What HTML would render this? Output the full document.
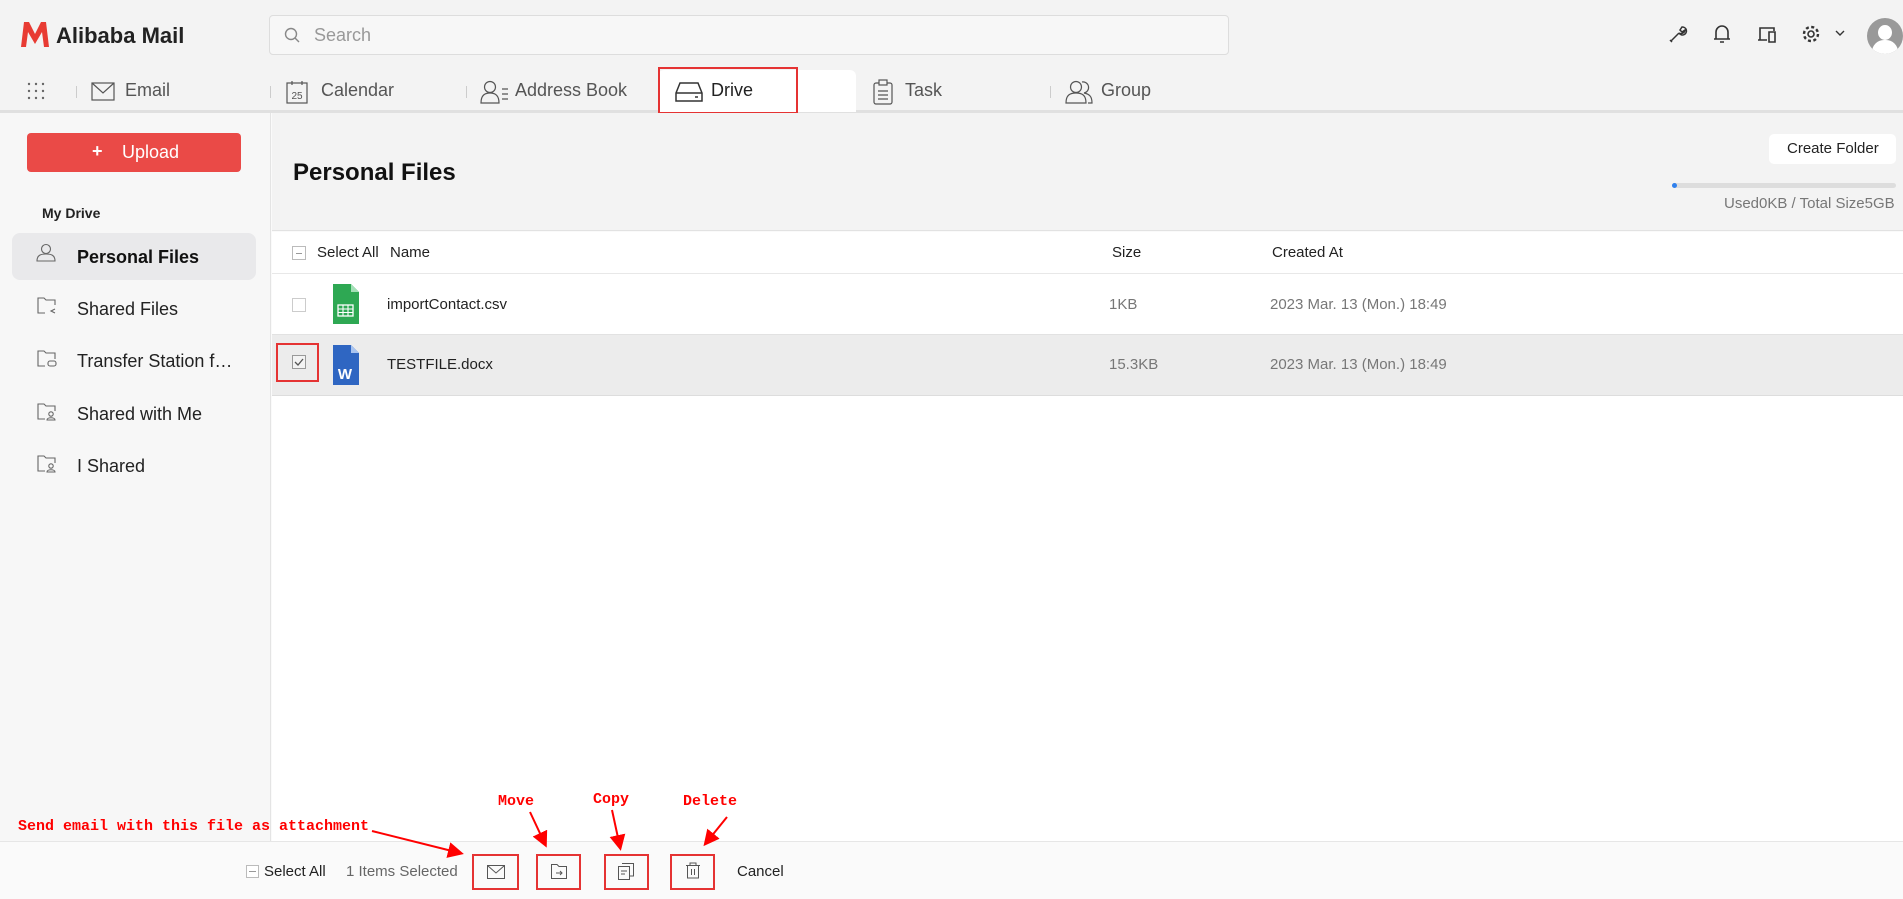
<!DOCTYPE html>
<html><head><meta charset="utf-8"><style>
*{margin:0;padding:0;box-sizing:border-box}
body{width:1903px;height:899px;overflow:hidden;background:#fafafa;font-family:"Liberation Sans",Arial,sans-serif;color:#222;position:relative}
.a{position:absolute}
.t{position:absolute;white-space:nowrap;line-height:1}
svg{position:absolute;overflow:visible}
.red{color:#f00;font-family:"Liberation Mono",monospace;font-weight:bold;font-size:15px}
.rb{position:absolute;border:2px solid #e53333}
</style></head><body>
<!-- header -->
<div class="a" style="left:0;top:0;width:1903px;height:112px;background:#f3f3f3"></div>
<div class="a" style="left:0;top:110px;width:1903px;height:3px;background:#e0e0e0"></div>
<svg style="left:20px;top:20px" width="30" height="30" viewBox="0 0 30 30"><path d="M1 27 L4 2 L9 2 L15 14 L21 2 L26 2 L29 27 L24 27 L22 12 L15 24 L8 12 L6 27Z" fill="#e83b33"/></svg>
<div class="t" style="left:56px;top:25px;font-size:22px;font-weight:bold;color:#222">Alibaba Mail</div>
<div class="a" style="left:269px;top:15px;width:960px;height:40px;background:#f7f7f7;border:1px solid #ddd;border-radius:4px"></div>
<svg style="left:284px;top:27px" width="16" height="16"><circle cx="7" cy="7" r="5.5" fill="none" stroke="#888" stroke-width="1.4"/><path d="M11 11 L15 15" stroke="#888" stroke-width="1.4"/></svg>
<div class="t" style="left:314px;top:26px;font-size:18px;color:#999">Search</div>
<!-- right icons -->
<svg style="left:1668px;top:24px" width="20" height="20" viewBox="0 0 20 20"><path d="M3 17 L11 9 M11 9 a4 4 0 1 0 3 -6 l-2 3 l2 2 l3 -2 a4 4 0 0 1 -6 3 M2 16 l2 2" fill="none" stroke="#333" stroke-width="1.5"/></svg>
<svg style="left:1712px;top:23px" width="20" height="22"><path d="M4 16 V9 a6 6 0 0 1 12 0 V16 Z M2 16 H18 M8 19 H12" fill="none" stroke="#333" stroke-width="1.6"/></svg>
<svg style="left:1757px;top:25px" width="22" height="20"><path d="M3 15 V3 H17 V6 M1 15 H10 M12 7 H18 V17 H12 Z" fill="none" stroke="#333" stroke-width="1.6"/></svg>
<svg style="left:1801px;top:24px" width="20" height="20"><circle cx="10" cy="10" r="3" fill="none" stroke="#333" stroke-width="1.6"/><circle cx="10" cy="10" r="7" fill="none" stroke="#333" stroke-width="2.4" stroke-dasharray="3 2.5"/></svg>
<svg style="left:1835px;top:30px" width="10" height="8"><path d="M1 1 L5 5 L9 1" fill="none" stroke="#333" stroke-width="1.4"/></svg>
<div class="a" style="left:1867px;top:18px;width:36px;height:36px;border-radius:50%;background:#999;overflow:hidden"><div class="a" style="left:11px;top:7px;width:14px;height:15px;border-radius:50%;background:#fff"></div><div class="a" style="left:5px;top:22px;width:26px;height:16px;border-radius:12px 12px 0 0;background:#fff"></div></div>
<!-- tabs -->
<svg style="left:27px;top:82px" width="18" height="18"><g fill="#666"><circle cx="2" cy="2" r="1.2"/><circle cx="9" cy="2" r="1.2"/><circle cx="16" cy="2" r="1.2"/><circle cx="2" cy="9" r="1.2"/><circle cx="9" cy="9" r="1.2"/><circle cx="16" cy="9" r="1.2"/><circle cx="2" cy="16" r="1.2"/><circle cx="9" cy="16" r="1.2"/><circle cx="16" cy="16" r="1.2"/></g></svg>
<div class="a" style="left:76px;top:86px;width:1px;height:12px;background:#ccc"></div>
<div class="a" style="left:270px;top:86px;width:1px;height:12px;background:#ccc"></div>
<div class="a" style="left:466px;top:86px;width:1px;height:12px;background:#ccc"></div>
<div class="a" style="left:1050px;top:86px;width:1px;height:12px;background:#ccc"></div>
<svg style="left:91px;top:82px" width="24" height="20"><rect x="1" y="1" width="22" height="17" fill="none" stroke="#555" stroke-width="1.2"/><path d="M1 1 L12 11 L23 1" fill="none" stroke="#555" stroke-width="1.2"/></svg>
<div class="t" style="left:125px;top:81px;font-size:18px;color:#555">Email</div>
<svg style="left:286px;top:80px" width="22" height="24"><rect x="1" y="3" width="20" height="20" fill="none" stroke="#555" stroke-width="1.2"/><path d="M6 1 V5 M16 1 V5" stroke="#555" stroke-width="1.2"/><text x="11" y="19" font-size="10" text-anchor="middle" fill="#555" font-family="Liberation Sans">25</text></svg>
<div class="t" style="left:321px;top:81px;font-size:18px;color:#555">Calendar</div>
<svg style="left:480px;top:80px" width="30" height="24"><circle cx="10" cy="7" r="5.5" fill="none" stroke="#555" stroke-width="1.2"/><path d="M1 23 C1 15 5 13 10 13 C15 13 19 15 19 23 Z" fill="none" stroke="#555" stroke-width="1.2"/><path d="M22 9 H28 M22 14 H28 M22 19 H28" stroke="#555" stroke-width="1.2"/></svg>
<div class="t" style="left:515px;top:81px;font-size:18px;color:#555">Address Book</div>
<div class="a" style="left:658px;top:70px;width:198px;height:42px;background:#fff;border-radius:6px 6px 0 0"></div>
<div class="rb" style="left:658px;top:67px;width:140px;height:47px"></div>
<svg style="left:675px;top:81px" width="28" height="22"><path d="M1 12 L5 2 H23 L27 12 V20 H1 Z M1 12 H27" fill="none" stroke="#333" stroke-width="1.5"/><path d="M20 16 H23" stroke="#333" stroke-width="1.5"/></svg>
<div class="t" style="left:711px;top:81px;font-size:18px;color:#222">Drive</div>
<svg style="left:872px;top:79px" width="22" height="26"><rect x="2" y="4" width="18" height="21" rx="2" fill="none" stroke="#555" stroke-width="1.2"/><rect x="7" y="1" width="8" height="5" fill="#f3f3f3" stroke="#555" stroke-width="1.2"/><path d="M6 12 H16 M6 16 H16 M6 20 H16" stroke="#555" stroke-width="1.2"/></svg>
<div class="t" style="left:905px;top:81px;font-size:18px;color:#555">Task</div>
<svg style="left:1063px;top:80px" width="32" height="24"><circle cx="13" cy="7" r="5.5" fill="none" stroke="#555" stroke-width="1.2"/><path d="M3 23 C3 15 7 13 13 13 C19 13 23 15 23 23 Z" fill="none" stroke="#555" stroke-width="1.2"/><path d="M19 2 A5.5 5.5 0 0 1 21 13 C26 14 29 16 29 23 H25" fill="none" stroke="#555" stroke-width="1.2"/></svg>
<div class="t" style="left:1101px;top:81px;font-size:18px;color:#555">Group</div>
<!-- sidebar -->
<div class="a" style="left:0;top:113px;width:271px;height:728px;background:#f7f7f7;border-right:1px solid #e4e4e4"></div>
<div class="a" style="left:27px;top:133px;width:214px;height:39px;background:#ea4a47;border-radius:4px"></div>
<div class="t" style="left:92px;top:142px;font-size:18px;color:#fff;font-weight:bold">+</div>
<div class="t" style="left:122px;top:143px;font-size:18px;color:#fff">Upload</div>
<div class="t" style="left:42px;top:206px;font-size:14px;font-weight:bold;color:#222">My Drive</div>
<div class="a" style="left:12px;top:233px;width:244px;height:47px;background:#e9e9eb;border-radius:8px"></div>
<svg style="left:36px;top:243px" width="20" height="20"><circle cx="10" cy="6" r="4.5" fill="none" stroke="#666" stroke-width="1.1"/><path d="M1 18 C1 12 5 11 10 11 C15 11 19 12 19 18 Z" fill="none" stroke="#666" stroke-width="1.1"/></svg>
<div class="t" style="left:77px;top:248px;font-size:18px;font-weight:bold;color:#111">Personal Files</div>
<g></g>
<svg style="left:37px;top:297px" width="20" height="18"><path d="M8 16 H1 V1 H7 L9 3 H18 V8" fill="none" stroke="#666" stroke-width="1.1"/><path d="M18 12 L14 14 L18 16" fill="none" stroke="#666" stroke-width="1.1"/></svg>
<div class="t" style="left:77px;top:300px;font-size:18px;color:#222">Shared Files</div>
<svg style="left:37px;top:350px" width="20" height="18"><path d="M8 16 H1 V1 H7 L9 3 H18 V9" fill="none" stroke="#666" stroke-width="1.1"/><rect x="11" y="11" width="8" height="5" rx="2" fill="none" stroke="#666" stroke-width="1.1"/></svg>
<div class="t" style="left:77px;top:352px;font-size:18px;color:#222">Transfer Station f…</div>
<svg style="left:37px;top:403px" width="20" height="18"><path d="M8 16 H1 V1 H7 L9 3 H18 V8" fill="none" stroke="#666" stroke-width="1.1"/><circle cx="14" cy="11" r="2.2" fill="none" stroke="#666" stroke-width="1.1"/><path d="M10 17 C10 14 18 14 18 17Z" fill="none" stroke="#666" stroke-width="1.1"/></svg>
<div class="t" style="left:77px;top:405px;font-size:18px;color:#222">Shared with Me</div>
<svg style="left:37px;top:455px" width="20" height="18"><path d="M8 16 H1 V1 H7 L9 3 H18 V8" fill="none" stroke="#666" stroke-width="1.1"/><circle cx="14" cy="11" r="2.2" fill="none" stroke="#666" stroke-width="1.1"/><path d="M10 17 C10 14 18 14 18 17Z" fill="none" stroke="#666" stroke-width="1.1"/></svg>
<div class="t" style="left:77px;top:457px;font-size:18px;color:#222">I Shared</div>
<!-- main -->
<div class="a" style="left:272px;top:113px;width:1631px;height:118px;background:#f3f3f3;border-bottom:1px solid #e2e2e2"></div>
<div class="t" style="left:293px;top:161px;font-size:24px;font-weight:bold;color:#111">Personal Files</div>
<div class="a" style="left:1769px;top:134px;width:127px;height:30px;background:#fff;border-radius:5px"></div>
<div class="t" style="left:1787px;top:141px;font-size:15px;color:#222">Create Folder</div>
<div class="a" style="left:1672px;top:183px;width:224px;height:5px;background:#ddd;border-radius:3px"></div>
<div class="a" style="left:1672px;top:183px;width:5px;height:5px;background:#2f80ed;border-radius:3px"></div>
<div class="t" style="left:1724px;top:196px;font-size:15px;color:#777">Used0KB / Total Size5GB</div>
<div class="a" style="left:272px;top:232px;width:1631px;height:610px;background:#fff"></div>
<div class="a" style="left:272px;top:273px;width:1631px;height:1px;background:#e8e8e8"></div>
<div class="a" style="left:272px;top:334px;width:1631px;height:62px;background:#ececec;border-top:1px solid #e2e2e2;border-bottom:1px solid #ddd"></div>
<div class="a" style="left:292px;top:246px;width:14px;height:14px;border:1px solid #bbb;background:#fff"><div class="a" style="left:3px;top:6px;width:6px;height:1px;background:#999"></div></div>
<div class="t" style="left:317px;top:245px;font-size:15px;color:#222">Select All</div>
<div class="t" style="left:390px;top:245px;font-size:15px;color:#222">Name</div>
<div class="t" style="left:1112px;top:245px;font-size:15px;color:#222">Size</div>
<div class="t" style="left:1272px;top:245px;font-size:15px;color:#222">Created At</div>
<div class="a" style="left:292px;top:298px;width:14px;height:14px;border:1px solid #ccc;background:#fff"></div>
<svg style="left:333px;top:284px" width="26" height="40"><path d="M0 0 H18 L26 8 V40 H0Z" fill="#2ea853"/><path d="M18 0 L26 8 H18Z" fill="#a3e0b6"/><rect x="5" y="21" width="15" height="11" fill="none" stroke="#fff" stroke-width="1.3"/><path d="M5 25 H20 M5 28.5 H20 M10 21 V32 M15 21 V32" stroke="#fff" stroke-width="1.1"/></svg>
<div class="t" style="left:387px;top:297px;font-size:15px;color:#222">importContact.csv</div>
<div class="t" style="left:1109px;top:297px;font-size:15px;color:#777">1KB</div>
<div class="t" style="left:1270px;top:297px;font-size:15px;color:#777">2023 Mar. 13 (Mon.) 18:49</div>
<div class="rb" style="left:276px;top:343px;width:43px;height:39px"></div>
<div class="a" style="left:292px;top:355px;width:14px;height:14px;border:1px solid #999;background:#f3f3f3"></div>
<svg style="left:294px;top:357px" width="10" height="10"><path d="M1 5 L4 8 L9 2" fill="none" stroke="#555" stroke-width="1.3"/></svg>
<svg style="left:333px;top:345px" width="26" height="40"><path d="M0 0 H18 L26 8 V40 H0Z" fill="#2f66c2"/><path d="M18 0 L26 8 H18Z" fill="#a9c4f0"/><text x="12" y="34" font-size="15" font-weight="bold" fill="#fff" text-anchor="middle" font-family="Liberation Sans">W</text></svg>
<div class="t" style="left:387px;top:357px;font-size:15px;color:#222">TESTFILE.docx</div>
<div class="t" style="left:1109px;top:357px;font-size:15px;color:#777">15.3KB</div>
<div class="t" style="left:1270px;top:357px;font-size:15px;color:#777">2023 Mar. 13 (Mon.) 18:49</div>
<!-- bottom bar -->
<div class="a" style="left:0;top:841px;width:1903px;height:58px;background:#fafafa;border-top:1px solid #e6e6e6"></div>
<div class="a" style="left:246px;top:865px;width:13px;height:13px;border:1px solid #bbb;background:#fff"><div class="a" style="left:2px;top:5px;width:7px;height:1px;background:#999"></div></div>
<div class="t" style="left:264px;top:864px;font-size:15px;color:#222">Select All</div>
<div class="t" style="left:346px;top:864px;font-size:15px;color:#666">1 Items Selected</div>
<div class="rb" style="left:472px;top:854px;width:47px;height:36px"></div>
<svg style="left:487px;top:865px" width="18" height="14"><rect x="0.5" y="0.5" width="17" height="13" fill="none" stroke="#555"/><path d="M0.5 0.5 L9 8 L17.5 0.5" fill="none" stroke="#555"/></svg>
<div class="rb" style="left:536px;top:854px;width:45px;height:36px"></div>
<svg style="left:551px;top:864px" width="16" height="15"><path d="M0.5 0.5 H6 L8 2.5 H15.5 V14.5 H0.5Z" fill="none" stroke="#555"/><path d="M5 9 H11 M9 7 L11 9 L9 11" fill="none" stroke="#555"/></svg>
<div class="rb" style="left:604px;top:854px;width:45px;height:36px"></div>
<svg style="left:618px;top:863px" width="18" height="17"><rect x="0.5" y="3.5" width="11" height="13" fill="none" stroke="#555"/><path d="M4 0.5 H15.5 V13 H12" fill="none" stroke="#555"/><path d="M3 8 H9 M3 11 H7" stroke="#555"/></svg>
<div class="rb" style="left:670px;top:854px;width:45px;height:36px"></div>
<svg style="left:685px;top:862px" width="16" height="17"><path d="M1 3.5 H15 M5 3.5 V1 H11 V3.5 M2.5 3.5 V16 H13.5 V3.5 M6.5 7 V13 M9.5 7 V13" fill="none" stroke="#555"/></svg>
<div class="t" style="left:737px;top:864px;font-size:15px;color:#222">Cancel</div>
<!-- annotations -->
<div class="t red" style="left:18px;top:819px">Send email with this file as attachment</div>
<div class="t red" style="left:498px;top:794px">Move</div>
<div class="t red" style="left:593px;top:792px">Copy</div>
<div class="t red" style="left:683px;top:794px">Delete</div>
<svg style="left:0;top:0" width="1903" height="899"><defs><marker id="m" markerWidth="8" markerHeight="8" refX="6" refY="4" orient="auto"><path d="M0 0 L8 4 L0 8Z" fill="#f00"/></marker></defs>
<g stroke="#f00" stroke-width="2" fill="none" marker-end="url(#m)">
<path d="M372 831 L460 853"/><path d="M530 812 L545 844"/><path d="M612 810 L620 847"/><path d="M727 817 L706 843"/></g></svg>
</body></html>
